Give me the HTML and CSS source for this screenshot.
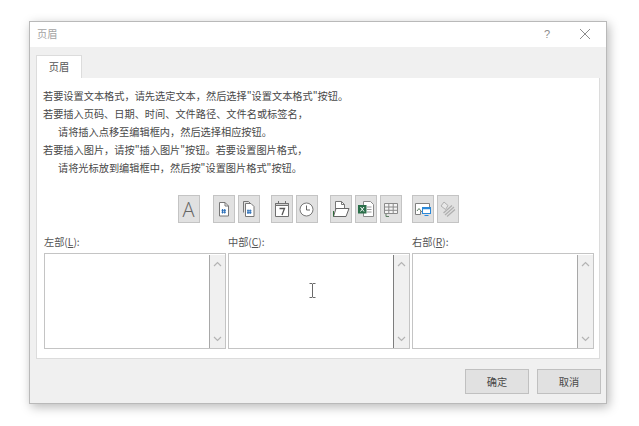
FILE: index.html
```html
<!DOCTYPE html>
<html lang="zh-CN">
<head>
  <meta charset="UTF-8" />
  <title>页眉</title>
  <link rel="stylesheet" href="styles.css">
</head>
<body>

  <div class="dialog">
    <header class="title-bar">
      <span class="title">页眉</span>
      <span class="help">?</span>
      <svg class="close" width="12" height="12" viewBox="0 0 12 12"><path d="M1 1l10 10M11 1L1 11" stroke="#8c8c8c" fill="none"/></svg>
    </header>

    <div class="dialog-body">
      <div class="tab">页眉</div>

      <section class="panel">
        <div class="help-text">
          <p>若要设置文本格式，请先选定文本，然后选择"设置文本格式"按钮。</p>
          <p>若要插入页码、日期、时间、文件路径、文件名或标签名，</p>
          <p class="indent">请将插入点移至编辑框内，然后选择相应按钮。</p>
          <p>若要插入图片，请按"插入图片"按钮。若要设置图片格式，</p>
          <p class="indent">请将光标放到编辑框中，然后按"设置图片格式"按钮。</p>
        </div>

        <div class="toolbar">
          <div class="tool-group">
            <button class="tool"><span class="tool-a">A</span></button>
          </div>
          <div class="tool-group">
            <button class="tool">
              <svg width="12" height="15" viewBox="0 0 12 15"><path d="M1.500 0.500h5.500l3.500 3.500v10h-9z" fill="#fff" stroke="#777"/><path d="M7 0.500v3.500h3.500" fill="none" stroke="#777"/><path d="M4.500 7v4.500M6.700 7v4.500M3.500 8.300h4.500M3.500 10.200h4.500" stroke="#2b6fb8"/></svg>
            </button>
            <button class="tool">
              <svg width="12" height="16" viewBox="0 0 12 16"><path d="M0.500 11.500v-11h5l1.500 1.500" fill="none" stroke="#777"/><path d="M2.500 2.500h5.500l3 3v10h-8.500z" fill="#fff" stroke="#777"/><path d="M5 8.500v4.500M7.200 8.500v4.500M4 9.800h4.500M4 11.700h4.500" stroke="#2b6fb8"/></svg>
            </button>
          </div>
          <div class="tool-group">
            <button class="tool">
              <svg width="16" height="16" viewBox="0 0 16 16"><path d="M1.500 2.500h13v13h-13z" fill="#fff" stroke="#707070"/><path d="M1.500 2.500h13v2h-13z" fill="#d0d0d0" stroke="#707070"/><path d="M4.500 0v3M11.500 0v3" stroke="#707070"/><path d="M5.500 7.500h5L8 14" fill="none" stroke="#555" stroke-width="1.300"/></svg>
            </button>
            <button class="tool">
              <svg width="15" height="15" viewBox="0 0 15 15"><circle cx="7.500" cy="7.500" r="6.500" fill="#fff" stroke="#777"/><path d="M7.500 3.500v4.500h3.500" fill="none" stroke="#666"/></svg>
            </button>
          </div>
          <div class="tool-group">
            <button class="tool">
              <svg width="18" height="18" viewBox="0 0 18 18"><path d="M3.500 10V1.500h6l3 3V8" fill="#fff" stroke="#777"/><path d="M9.500 1.500v3h3" fill="none" stroke="#777"/><path d="M1.500 16.500l2.500-8h13l-3 8z" fill="#fff" stroke="#666"/><path d="M1.500 16.500V11" stroke="#2f6b3a"/></svg>
            </button>
            <button class="tool">
              <svg width="18" height="18" viewBox="0 0 18 18"><path d="M6.500 1.500h7l3 3v12h-10z" fill="#fff" stroke="#8a8a8a"/><path d="M10 7h4.500M10 9.500h4.500M10 12h4.500" stroke="#9a9a9a"/><rect x="1" y="5" width="8.500" height="8.500" fill="#2a6f4a"/><path d="M3.500 7l3.500 4.500M7 7l-3.500 4.500" stroke="#fff"/></svg>
            </button>
            <button class="tool">
              <svg width="16" height="15" viewBox="0 0 16 15"><path d="M1.500 1.500h13v10h-13zM1.500 5h13M1.500 8.300h13M5.800 1.500v10M10.200 1.500v10" fill="#f4f4f4" stroke="#8a8a8a"/><path d="M3 12v2.500h3" fill="none" stroke="#5d7f63"/></svg>
            </button>
          </div>
          <div class="tool-group">
            <button class="tool">
              <svg width="17" height="15" viewBox="0 0 17 15"><path d="M1.500 1.500h14v4h-6v4h-3v3h-5z" fill="#fff" stroke="#808080"/><path d="M3 9l2-2.500 2 2.500" fill="none" stroke="#5d7f63"/><rect x="8.500" y="5.500" width="8" height="6" fill="#fff" stroke="#2b88d8"/><path d="M9 6.500h7" stroke="#2b88d8" stroke-width="1.500"/><path d="M10.500 13.500h4" stroke="#2b88d8"/></svg>
            </button>
            <button class="tool">
              <svg width="17" height="17" viewBox="0 0 17 17"><path d="M2 5l3-4 4 3.500-2.500 4z" fill="#e8e8e8" stroke="#b0b0b0"/><path d="M6 14l9-8M8 15.500l8-7M4.500 12l8.500-7.500" stroke="#b0b0b0" stroke-width="1.300"/></svg>
            </button>
          </div>
        </div>

        <div class="editors">
          <div class="editor">
            <label>左部(<u>L</u>):</label>
            <div class="edit-box">
              <div class="edit-area"></div>
              <div class="scrollbar">
                <svg width="9" height="6" viewBox="0 0 9 6"><path d="M1 5l3.500-3.500L8 5" fill="none" stroke="#b4b4b4" stroke-width="1.200"/></svg>
                <svg width="9" height="6" viewBox="0 0 9 6"><path d="M1 1l3.500 3.500L8 1" fill="none" stroke="#b4b4b4" stroke-width="1.200"/></svg>
              </div>
            </div>
          </div>
          <div class="editor">
            <label>中部(<u>C</u>):</label>
            <div class="edit-box">
              <div class="edit-area"></div>
              <div class="scrollbar dark-edge">
                <svg width="9" height="6" viewBox="0 0 9 6"><path d="M1 5l3.500-3.500L8 5" fill="none" stroke="#b4b4b4" stroke-width="1.200"/></svg>
                <svg width="9" height="6" viewBox="0 0 9 6"><path d="M1 1l3.500 3.500L8 1" fill="none" stroke="#b4b4b4" stroke-width="1.200"/></svg>
              </div>
              <!-- mouse pointer sitting over the box -->
              <svg class="ibeam" width="7" height="15" viewBox="0 0 7 15"><path d="M0.500 0.500h2.500l0.500 0.500 0.500-0.500h2.500M3.500 1v13M0.500 14.500h2.500l0.500-0.500 0.500 0.500h2.500" fill="none" stroke="#6a6a6a"/></svg>
            </div>
          </div>
          <div class="editor">
            <label>右部(<u>R</u>):</label>
            <div class="edit-box">
              <div class="edit-area"></div>
              <div class="scrollbar">
                <svg width="9" height="6" viewBox="0 0 9 6"><path d="M1 5l3.500-3.500L8 5" fill="none" stroke="#b4b4b4" stroke-width="1.200"/></svg>
                <svg width="9" height="6" viewBox="0 0 9 6"><path d="M1 1l3.500 3.500L8 1" fill="none" stroke="#b4b4b4" stroke-width="1.200"/></svg>
              </div>
            </div>
          </div>
        </div>
      </section>

      <footer class="actions">
        <button class="action">确定</button>
        <button class="action">取消</button>
      </footer>
    </div>
  </div>

</body>
</html>
```

FILE: styles.css
```css
html, body {
  height: 100%;
}
body {
  margin: 0;
  padding: 21px 0 0 29px;
  box-sizing: border-box;
  background: #fff;
  overflow: hidden;
  font-family: "Noto Sans CJK SC", "Liberation Sans", sans-serif;
  font-size: 10.2px;
  color: #484848;
}
.dialog {
  width: 578px;
  height: 383px;
  box-sizing: border-box;
  border: 1px solid #b9b9b9;
  background: #f0f0f0;
  box-shadow: 2px 3px 10px rgba(0,0,0,0.28);
  display: flex;
  flex-direction: column;
}
.title-bar {
  height: 25px;
  flex: none;
  box-sizing: border-box;
  padding: 0 0 2px 7px;
  background: #fff;
  display: flex;
  align-items: center;
}
.title {
  flex: 1;
  color: #a3a3a3;
}
.help {
  color: #8c8c8c;
  font-family: "Liberation Sans", sans-serif;
  font-size: 11px;
  margin-right: 29px;
}
.close {
  margin-right: 15px;
}
.dialog-body {
  flex: 1;
  padding: 8px 5px 0 6px;
  display: flex;
  flex-direction: column;
}
.tab {
  width: 46px;
  height: 23px;
  box-sizing: border-box;
  padding-bottom: 2px;
  background: #fff;
  border: 1px solid #dcdcdc;
  border-bottom: none;
  display: flex;
  align-items: center;
  justify-content: center;
  color: #555;
}
.panel {
  width: 564px;
  height: 281px;
  box-sizing: border-box;
  background: #fff;
  border: 1px solid #dcdcdc;
  border-top: none;
  padding: 9px 5px 0 7px;
}
.help-text {
  margin-left: -1px;
}
.help-text p {
  margin: 0;
  height: 18px;
  line-height: 18px;
  white-space: nowrap;
}
.help-text .indent {
  padding-left: 15px;
}
.toolbar {
  display: flex;
  justify-content: center;
  gap: 12px;
  margin-top: 18px;
  padding-right: 2px;
}
.tool-group {
  display: flex;
  gap: 3px;
}
.tool-group:nth-child(2) {
  margin-left: 1px;
}
.tool-group:nth-child(3) {
  margin-left: -1px;
}
.tool-group:nth-child(5) {
  margin-left: -2px;
}
.tool {
  width: 22px;
  height: 28px;
  padding: 0;
  box-sizing: border-box;
  background: #e1e1e1;
  border: 1px solid #c4c4c4;
  display: flex;
  align-items: center;
  justify-content: center;
}
.tool-a {
  font-family: "Open Sans", sans-serif;
  font-weight: 300;
  font-size: 20px;
  color: #666;
}
.editors {
  display: flex;
  gap: 2px;
  margin-top: 12px;
}
.editor {
  width: 182px;
  display: flex;
  flex-direction: column;
}
.editor label {
  height: 18px;
  line-height: 14px;
  color: #555;
}
.edit-box {
  position: relative;
  height: 96px;
  box-sizing: border-box;
  border: 1px solid #c4c4c4;
  background: #fff;
  display: flex;
}
.edit-area {
  flex: 1;
}
.scrollbar {
  width: 16px;
  margin: 1px 0 0;
  box-sizing: border-box;
  border-left: 1px solid #a8a8a8;
  background: #f0f0f0;
  display: flex;
  flex-direction: column;
  justify-content: space-between;
  align-items: center;
  padding: 6px 0;
}
.dark-edge {
  border-left-color: #7d7d7d;
}
.ibeam {
  position: absolute;
  left: 80px;
  top: 29px;
}
.actions {
  display: flex;
  justify-content: flex-end;
  gap: 8px;
  margin-top: 10px;
}
.action {
  width: 64px;
  height: 25px;
  padding: 0;
  box-sizing: border-box;
  background: #e1e1e1;
  border: 1px solid #c0c0c0;
  font-family: inherit;
  font-size: 10.2px;
  color: #484848;
}
```
